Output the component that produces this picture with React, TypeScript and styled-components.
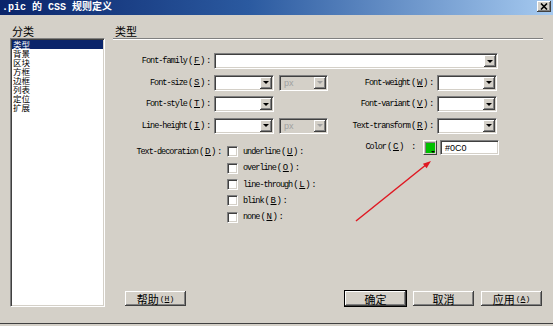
import React from 'react'
import styled, { createGlobalStyle } from 'styled-components'

const mono = `"Liberation Mono", "Noto Sans CJK SC", monospace`
const cjk = `"Noto Sans CJK SC", "Liberation Sans", sans-serif`

const GlobalStyle = createGlobalStyle`
  html, body {
    margin: 0;
    padding: 0;
    background: #d4d0c8;
  }
  body {
    width: 553px;
    height: 326px;
    overflow: hidden;
  }
`

// sunken / raised frames of the classic windows look
const sunken = `
  border: 1px solid;
  border-color: #808080 #ffffff #ffffff #808080;
  box-shadow: inset 1px 1px #404040, inset -1px -1px #d4d0c8;
`
const raised = `
  box-shadow: inset -1px -1px #404040, inset 1px 1px #ffffff, inset -2px -2px #808080;
`

const Page = styled.div`
  position: relative;
  width: 553px;
  height: 324px;
  box-sizing: border-box;
  display: flex;
  flex-direction: column;
  background: #d4d0c8;
  border-bottom: 1px solid #404040;
  overflow: hidden;
`

const TitleBar = styled.div`
  flex: none;
  height: 15px;
  display: flex;
  justify-content: space-between;
  padding: 0 2px;
  background: linear-gradient(90deg, #0a246a 0%, #2b5aa0 45%, #a6caf0 100%);
`

const Title = styled.div`
  font-family: ${mono};
  font-weight: bold;
  font-size: 10px;
  line-height: 15px;
  color: #ffffff;
  white-space: pre;
`

const CloseBtn = styled.div`
  margin-top: 1px;
  width: 14px;
  height: 11px;
  display: flex;
  align-items: center;
  justify-content: center;
  background: #d4d0c8;
  ${raised}
`

const Body = styled.div`
  flex: 1;
  min-height: 0;
  display: flex;
  gap: 8px;
  padding: 10px 8px 16px 10px;
`

const LeftCol = styled.div`
  width: 95px;
  display: flex;
  flex-direction: column;
`

const GroupTitle = styled.div`
  height: 13px;
  padding-left: 2px;
  font-family: ${cjk};
  font-size: 11px;
  line-height: 12px;
  color: #000;
`

const ListBox = styled.div`
  flex: 1;
  box-sizing: border-box;
  background: #ffffff;
  ${sunken}
  padding: 1px;
`

const ListItem = styled.div<{ $active?: boolean }>`
  height: 9px;
  padding-left: 1px;
  font-family: ${cjk};
  font-size: 8.5px;
  line-height: 9px;
  color: ${(p) => (p.$active ? '#ffffff' : '#000000')};
  background: ${(p) => (p.$active ? '#0a246a' : 'transparent')};
`

const RightCol = styled.div`
  flex: 1;
  display: flex;
  flex-direction: column;
`

const Rule = styled.div`
  margin-right: 2px;
  border-top: 1px solid #808080;
  border-bottom: 1px solid #ffffff;
`

const FormGrid = styled.div`
  margin-top: 13px;
  display: grid;
  grid-template-columns: 101px 65px 49px 109px 61px;
  grid-auto-rows: 16px;
  row-gap: 5.6px;
  align-items: center;
`

const FieldLabel = styled.div`
  padding-right: 2px;
  text-align: right;
  font-family: ${mono};
  font-size: 8.5px;
  letter-spacing: -1px;
  color: #000;
  white-space: nowrap;
`

const Key = styled.span`
  font-size: 9px;
  letter-spacing: 0.6px;
  margin-left: 1px;
`

const Field = styled.div<{ $w: number; $off?: boolean; $span?: boolean }>`
  width: ${(p) => p.$w}px;
  height: 16px;
  box-sizing: border-box;
  display: flex;
  padding: 1px;
  ${sunken}
  background: ${(p) => (p.$off ? '#d4d0c8' : '#ffffff')};
  grid-column: ${(p) => (p.$span ? '2 / -1' : 'auto')};
`

const FieldValue = styled.div<{ $off?: boolean }>`
  flex: 1;
  padding-left: 3px;
  font-family: "Liberation Sans", sans-serif;
  font-size: 9px;
  line-height: 12px;
  color: ${(p) => (p.$off ? '#a0a0a0' : '#000')};
`

const DropBtn = styled.div<{ $off?: boolean }>`
  width: 12px;
  display: flex;
  align-items: center;
  justify-content: center;
  background: #d4d0c8;
  ${raised}
  &::after {
    content: '';
    border-left: 3px solid transparent;
    border-right: 3px solid transparent;
    border-top: 3px solid ${(p) => (p.$off ? '#a0a0a0' : '#000')};
  }
`

const Lower = styled.div`
  margin-top: 6px;
  display: flex;
  align-items: flex-start;
`

const DecoGroup = styled.div`
  width: 240px;
  display: flex;
  padding-top: 4px;
`

const DecoLabel = styled(FieldLabel)`
  width: 110px;
  line-height: 16px;
`

const CheckList = styled.div`
  margin-left: 2px;
  display: flex;
  flex-direction: column;
`

const CheckRow = styled.div`
  height: 16.3px;
  display: flex;
  align-items: center;
  gap: 5px;
`

const CheckBox = styled.div`
  width: 11px;
  height: 11px;
  box-sizing: border-box;
  background: #ffffff;
  ${sunken}
`

const CheckText = styled.span`
  font-family: ${mono};
  font-size: 8.5px;
  letter-spacing: -1px;
  color: #000;
`

const ColorGroup = styled.div`
  display: flex;
  align-items: center;
  height: 15px;
`

const ColorLabel = styled(FieldLabel)`
  width: 64px;
  padding-right: 0;
`

const Swatch = styled.div<{ $color: string }>`
  position: relative;
  margin-left: 6px;
  width: 14px;
  height: 15px;
  box-sizing: border-box;
  border: 1px solid;
  border-color: #ffffff #404040 #404040 #ffffff;
  padding: 1px;
  &::before {
    content: '';
    display: block;
    width: 100%;
    height: 100%;
    background: ${(p) => p.$color};
    box-shadow: inset 1px 1px #808080;
  }
  &::after {
    content: '';
    position: absolute;
    right: 1px;
    bottom: 1px;
    border-left: 2px solid transparent;
    border-right: 2px solid transparent;
    border-top: 2px solid #000;
  }
`

const ColorInput = styled(Field)`
  margin-left: 3px;
  height: 15px;
`

const Spacer = styled.div`
  flex: 1;
`

const ButtonRow = styled.div`
  display: flex;
  justify-content: space-between;
  padding: 0 2px 0 11px;
`

const ButtonGroup = styled.div`
  display: flex;
  gap: 5px;
`

const Button = styled.div<{ $default?: boolean }>`
  width: 63px;
  height: 17px;
  box-sizing: border-box;
  display: flex;
  align-items: center;
  justify-content: center;
  background: #d4d0c8;
  font-family: ${cjk};
  font-size: 11px;
  color: #000;
  border: 1px solid ${(p) => (p.$default ? '#000000' : 'transparent')};
  ${raised}
`

const BtnKey = styled.span`
  font-family: ${mono};
  font-size: 8px;
  margin-left: 1px;
`

const Annotation = styled.svg`
  position: absolute;
  left: 0;
  top: 0;
  pointer-events: none;
`

const categories = ['类型', '背景', '区块', '方框', '边框', '列表', '定位', '扩展']

const Label = ({ text, k, w }: { text: string; k: string; w?: boolean }) => (
  <>
    {text}
    <Key>
      (<u>{k}</u>){w ? ' ' : ''}:
    </Key>
  </>
)

const Select = ({ w, value, off }: { w: number; value?: string; off?: boolean }) => (
  <Field $w={w} $off={off}>
    <FieldValue $off={off}>{value}</FieldValue>
    <DropBtn $off={off} />
  </Field>
)

const decorations: [string, string][] = [
  ['underline', 'U'],
  ['overline', 'O'],
  ['line-through', 'L'],
  ['blink', 'B'],
  ['none', 'N'],
]

const App = () => {
  return (
    <>
      <GlobalStyle />
      <Page>
        <TitleBar>
          <Title>.pic 的 CSS 规则定义</Title>
          <CloseBtn>
            <svg width="8" height="7" viewBox="0 0 8 7">
              <path d="M1 0.5 L7 6.5 M7 0.5 L1 6.5" stroke="#000" strokeWidth="1.6" />
            </svg>
          </CloseBtn>
        </TitleBar>
        <Body>
          <LeftCol>
            <GroupTitle>分类</GroupTitle>
            <ListBox>
              {categories.map((c, i) => (
                <ListItem key={c} $active={i === 0}>
                  {c}
                </ListItem>
              ))}
            </ListBox>
          </LeftCol>
          <RightCol>
            <GroupTitle>类型</GroupTitle>
            <Rule />
            <FormGrid>
              <FieldLabel>
                <Label text="Font-family" k="F" />
              </FieldLabel>
              <Field $w={284} $span>
                <FieldValue />
                <DropBtn />
              </Field>

              <FieldLabel>
                <Label text="Font-size" k="S" />
              </FieldLabel>
              <Select w={60} />
              <Select w={49} value="px" off />
              <FieldLabel>
                <Label text="Font-weight" k="W" />
              </FieldLabel>
              <Select w={60} />

              <FieldLabel>
                <Label text="Font-style" k="T" />
              </FieldLabel>
              <Select w={60} />
              <div />
              <FieldLabel>
                <Label text="Font-variant" k="V" />
              </FieldLabel>
              <Select w={60} />

              <FieldLabel>
                <Label text="Line-height" k="I" />
              </FieldLabel>
              <Select w={60} />
              <Select w={49} value="px" off />
              <FieldLabel>
                <Label text="Text-transform" k="R" />
              </FieldLabel>
              <Select w={60} />
            </FormGrid>
            <Lower>
              <DecoGroup>
                <DecoLabel>
                  <Label text="Text-decoration" k="D" />
                </DecoLabel>
                <CheckList>
                  {decorations.map(([t, k]) => (
                    <CheckRow key={t}>
                      <CheckBox />
                      <CheckText>
                        <Label text={t} k={k} />
                      </CheckText>
                    </CheckRow>
                  ))}
                </CheckList>
              </DecoGroup>
              <ColorGroup>
                <ColorLabel>
                  <Label text="Color" k="C" w />
                </ColorLabel>
                <Swatch $color="#00c000" />
                <ColorInput $w={59}>
                  <FieldValue>#0C0</FieldValue>
                </ColorInput>
              </ColorGroup>
            </Lower>
            <Spacer />
            <ButtonRow>
              <Button>
                帮助<BtnKey>(<u>H</u>)</BtnKey>
              </Button>
              <ButtonGroup>
                <Button $default>确定</Button>
                <Button>取消</Button>
                <Button>
                  应用<BtnKey>(<u>A</u>)</BtnKey>
                </Button>
              </ButtonGroup>
            </ButtonRow>
          </RightCol>
        </Body>
        <Annotation width="553" height="326">
          <line x1="356" y1="221" x2="427" y2="164" stroke="#e01822" strokeWidth="1.5" />
          <polygon points="431,161 426.6,168.3 422.9,163.7" fill="#e01822" />
        </Annotation>
      </Page>
    </>
  )
}

export default App
